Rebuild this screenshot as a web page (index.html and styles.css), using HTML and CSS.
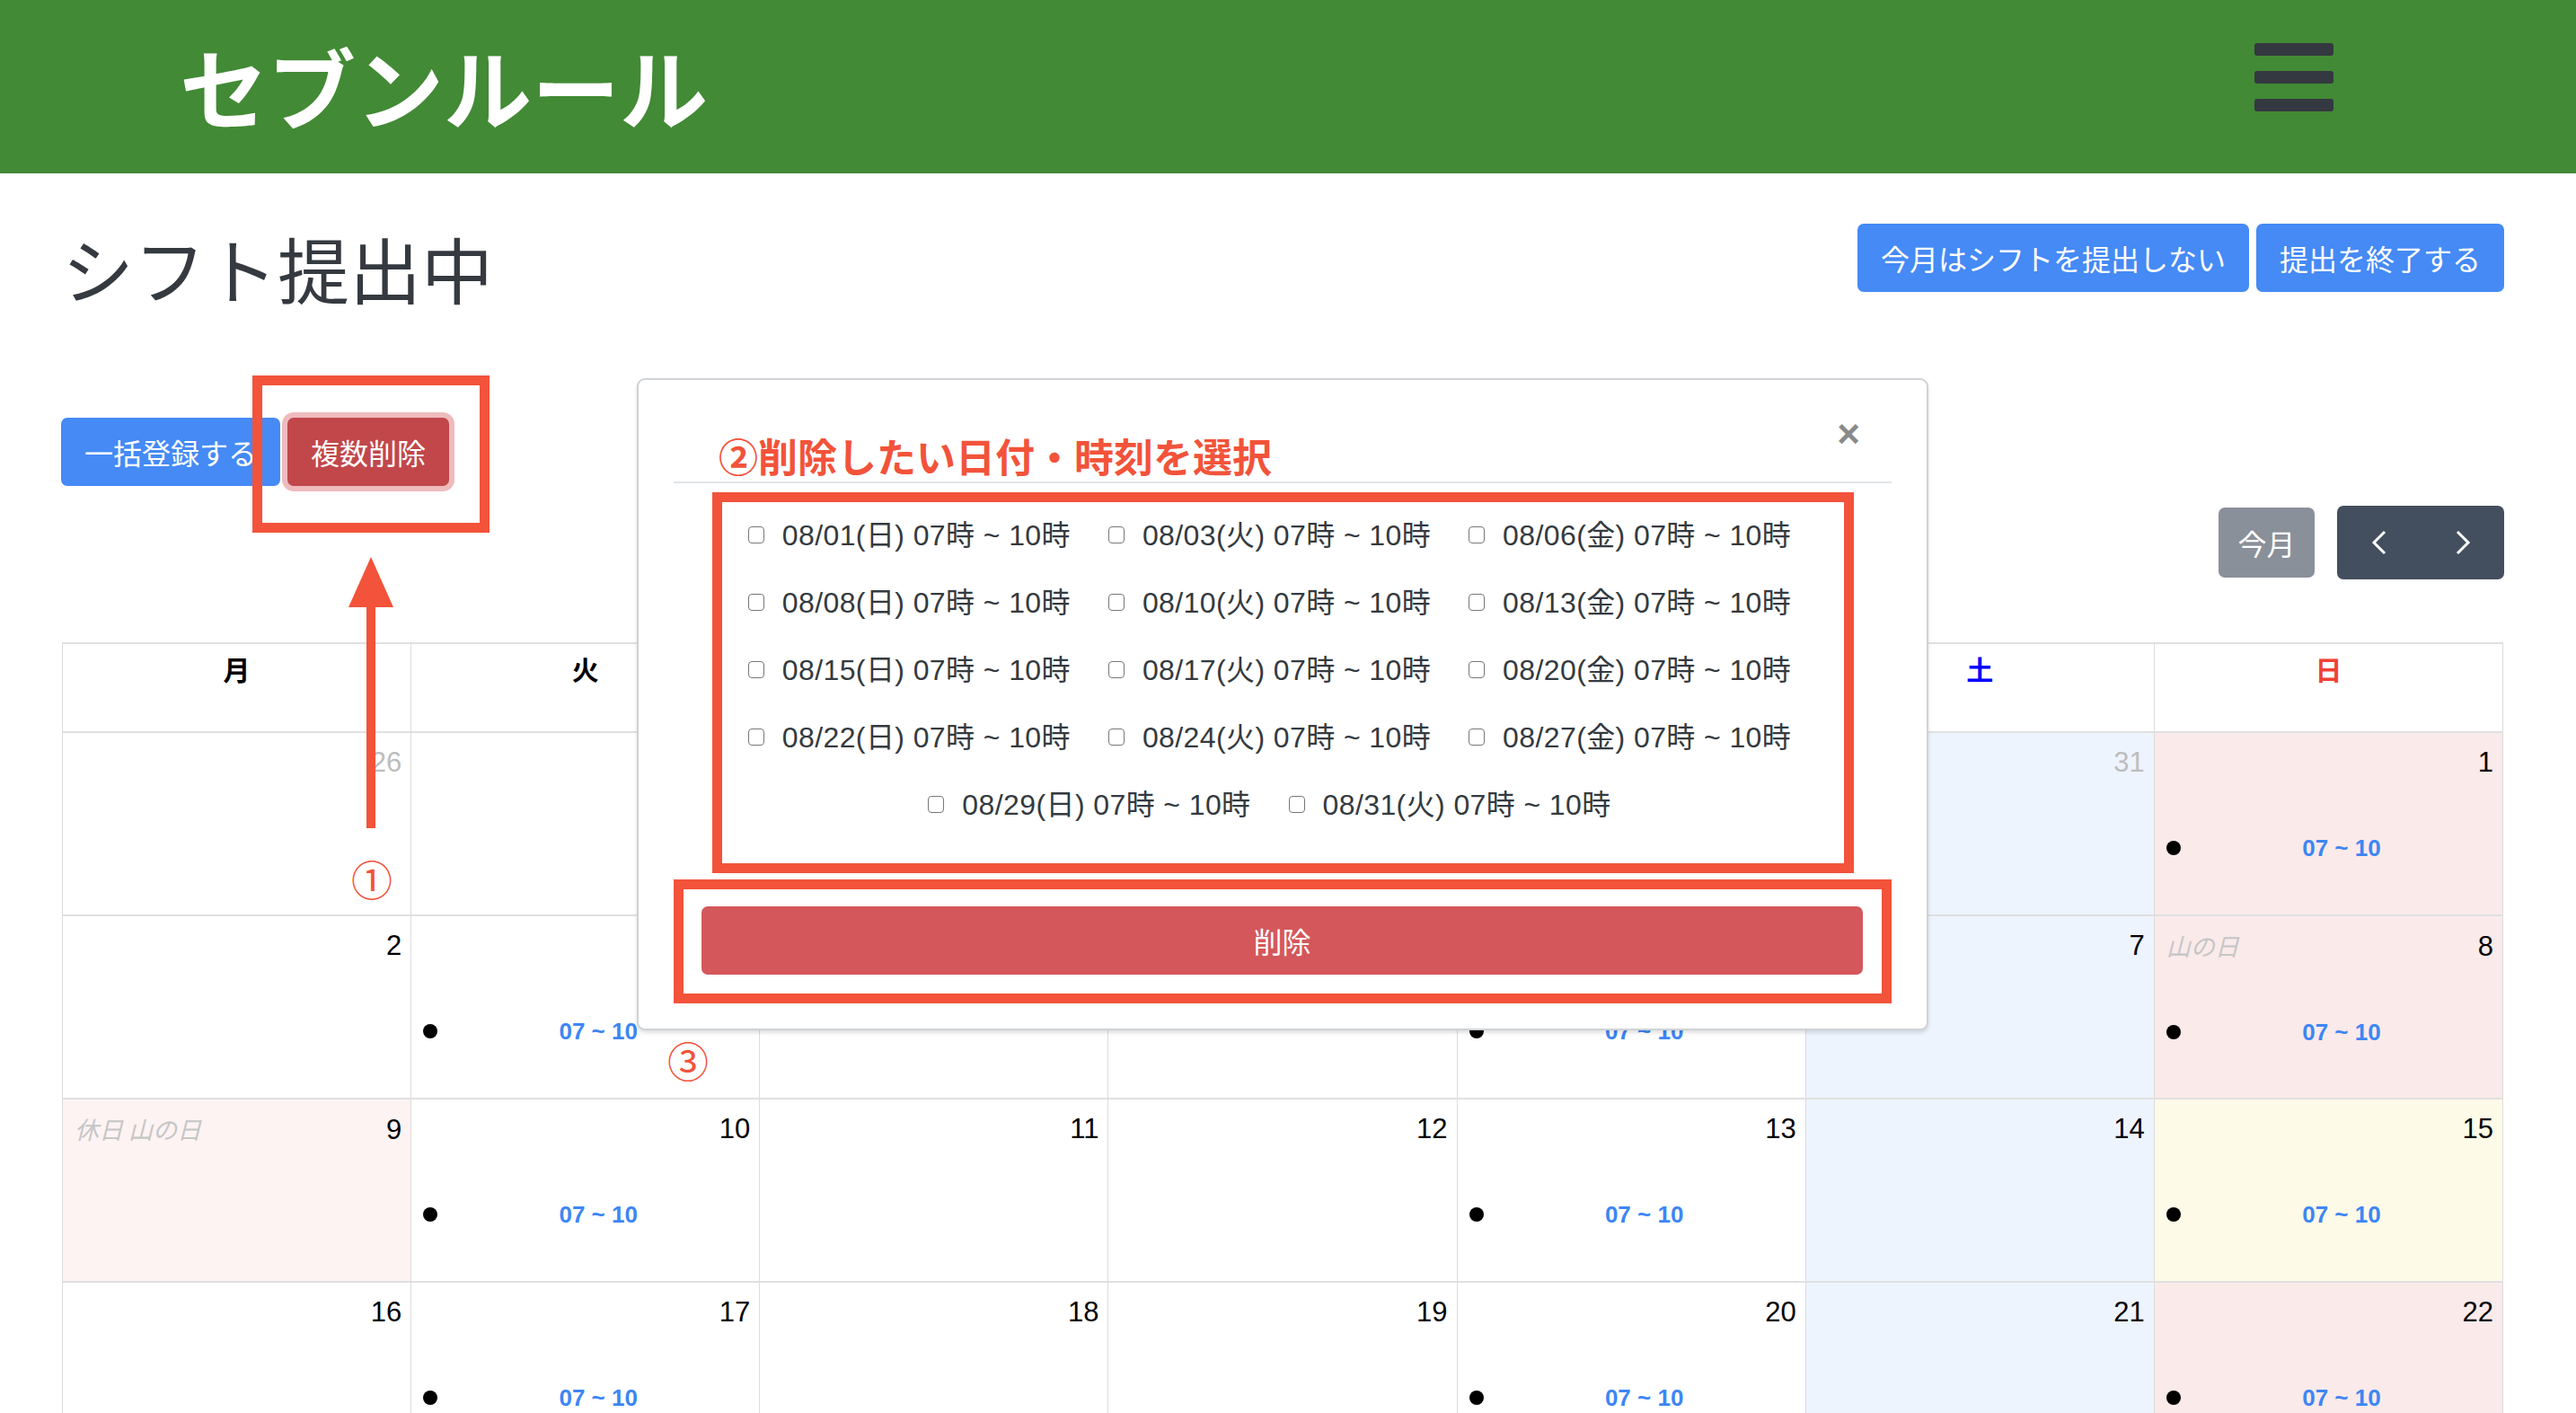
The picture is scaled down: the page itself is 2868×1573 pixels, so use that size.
FILE: index.html
```html
<!DOCTYPE html>
<html lang="ja">
<head>
<meta charset="utf-8">
<title>セブンルール</title>
<link rel="stylesheet" href="styles.css">
</head>
<body>
<header class="topbar">
  <div class="brand">セブンルール</div>
  <div class="burger"><span></span><span></span><span></span></div>
</header>

<main class="page">
  <div class="head">
    <h1 class="title">シフト提出中</h1>
    <div class="actions">
      <button class="btn btn-blue">今月はシフトを提出しない</button>
      <button class="btn btn-blue">提出を終了する</button>
    </div>
  </div>

  <div class="tools">
    <button class="btn btn-blue">一括登録する</button>
    <button class="btn btn-red focus">複数削除</button>
  </div>

  <div class="toolbar">
    <button class="today">今月</button>
    <div class="navgrp">
      <button class="nav"><svg width="18" height="28" viewBox="0 0 18 28"><polyline points="15,2 3,14 15,26" fill="none" stroke="#fff" stroke-width="3"/></svg></button>
      <button class="nav"><svg width="18" height="28" viewBox="0 0 18 28"><polyline points="3,2 15,14 3,26" fill="none" stroke="#fff" stroke-width="3"/></svg></button>
    </div>
  </div>

  <div class="cal">
    <div class="dh">月</div><div class="dh">火</div><div class="dh">水</div><div class="dh">木</div><div class="dh">金</div><div class="dh dh-sat">土</div><div class="dh dh-sun">日</div>

    <div class="cell other"><div class="top"><span class="num">26</span></div></div>
    <div class="cell other"><div class="top"><span class="num">27</span></div></div>
    <div class="cell other"><div class="top"><span class="num">28</span></div></div>
    <div class="cell other"><div class="top"><span class="num">29</span></div></div>
    <div class="cell other"><div class="top"><span class="num">30</span></div></div>
    <div class="cell other sat"><div class="top"><span class="num">31</span></div></div>
    <div class="cell sun"><div class="top"><span class="num">1</span></div><div class="ev"><span class="dot"></span><span class="time">07 ~ 10</span></div></div>

    <div class="cell"><div class="top"><span class="num">2</span></div></div>
    <div class="cell"><div class="top"><span class="num">3</span></div><div class="ev"><span class="dot"></span><span class="time">07 ~ 10</span></div></div>
    <div class="cell"><div class="top"><span class="num">4</span></div></div>
    <div class="cell"><div class="top"><span class="num">5</span></div></div>
    <div class="cell"><div class="top"><span class="num">6</span></div><div class="ev"><span class="dot"></span><span class="time">07 ~ 10</span></div></div>
    <div class="cell sat"><div class="top"><span class="num">7</span></div></div>
    <div class="cell sun"><div class="top"><span class="hol">山の日</span><span class="num">8</span></div><div class="ev"><span class="dot"></span><span class="time">07 ~ 10</span></div></div>

    <div class="cell holiday"><div class="top"><span class="hol">休日 山の日</span><span class="num">9</span></div></div>
    <div class="cell"><div class="top"><span class="num">10</span></div><div class="ev"><span class="dot"></span><span class="time">07 ~ 10</span></div></div>
    <div class="cell"><div class="top"><span class="num">11</span></div></div>
    <div class="cell"><div class="top"><span class="num">12</span></div></div>
    <div class="cell"><div class="top"><span class="num">13</span></div><div class="ev"><span class="dot"></span><span class="time">07 ~ 10</span></div></div>
    <div class="cell sat"><div class="top"><span class="num">14</span></div></div>
    <div class="cell today-cell"><div class="top"><span class="num">15</span></div><div class="ev"><span class="dot"></span><span class="time">07 ~ 10</span></div></div>

    <div class="cell"><div class="top"><span class="num">16</span></div></div>
    <div class="cell"><div class="top"><span class="num">17</span></div><div class="ev"><span class="dot"></span><span class="time">07 ~ 10</span></div></div>
    <div class="cell"><div class="top"><span class="num">18</span></div></div>
    <div class="cell"><div class="top"><span class="num">19</span></div></div>
    <div class="cell"><div class="top"><span class="num">20</span></div><div class="ev"><span class="dot"></span><span class="time">07 ~ 10</span></div></div>
    <div class="cell sat"><div class="top"><span class="num">21</span></div></div>
    <div class="cell sun"><div class="top"><span class="num">22</span></div><div class="ev"><span class="dot"></span><span class="time">07 ~ 10</span></div></div>
  </div>
</main>

<div class="modal">
  <div class="mhead">
    <h2 class="mtitle">②削除したい日付・時刻を選択</h2>
    <span class="close">×</span>
  </div>
  <div class="pick">
    <label class="item"><input type="checkbox">08/01(日) 07時 ~ 10時</label><label class="item"><input type="checkbox">08/03(火) 07時 ~ 10時</label><label class="item"><input type="checkbox">08/06(金) 07時 ~ 10時</label><label class="item"><input type="checkbox">08/08(日) 07時 ~ 10時</label><label class="item"><input type="checkbox">08/10(火) 07時 ~ 10時</label><label class="item"><input type="checkbox">08/13(金) 07時 ~ 10時</label><label class="item"><input type="checkbox">08/15(日) 07時 ~ 10時</label><label class="item"><input type="checkbox">08/17(火) 07時 ~ 10時</label><label class="item"><input type="checkbox">08/20(金) 07時 ~ 10時</label><label class="item"><input type="checkbox">08/22(日) 07時 ~ 10時</label><label class="item"><input type="checkbox">08/24(火) 07時 ~ 10時</label><label class="item"><input type="checkbox">08/27(金) 07時 ~ 10時</label><label class="item"><input type="checkbox">08/29(日) 07時 ~ 10時</label><label class="item"><input type="checkbox">08/31(火) 07時 ~ 10時</label>
  </div>
  <div class="delbox">
    <button class="delbtn">削除</button>
  </div>
</div>

<div class="ann-box"></div>
<svg class="ann-arrow" width="58" height="306" viewBox="0 0 58 306">
  <polygon points="29,0 54,56 4,56" fill="#f2533a"/>
  <rect x="24" y="50" width="10" height="252" fill="#f2533a"/>
</svg>
<span class="ann-num n1">①</span>
<span class="ann-num n3">③</span>
</body>
</html>
```

FILE: styles.css
```css
* { box-sizing: border-box; }

body {
  margin: 0;
  font-family: "Liberation Sans", "Noto Sans CJK JP", sans-serif;
  color: #212529;
  background: #fff;
  position: relative;
  height: 1573px;
  overflow: hidden;
}

button { font-family: "Noto Sans CJK JP", sans-serif; cursor: pointer; }

.topbar {
  height: 193px;
  background: #428a35;
  display: flex;
  align-items: center;
  justify-content: space-between;
  padding: 0 270px 0 200px;
}
.brand {
  font-family: "Noto Sans CJK JP", sans-serif;
  font-size: 98px;
  font-weight: 700;
  color: #fff;
  line-height: 1;
  margin-top: -6px;
}
.burger {
  display: flex;
  flex-direction: column;
  gap: 17px;
  width: 88px;
  margin-top: -22px;
}
.burger span {
  height: 14px;
  border-radius: 3px;
  background: #343840;
}

.page { padding: 0 81px 0 69px; }

.head {
  display: flex;
  justify-content: space-between;
  align-items: flex-start;
  padding-top: 56px;
}
.title {
  margin: 0;
  font-family: "Noto Sans CJK JP", sans-serif;
  font-size: 80px;
  font-weight: 400;
  line-height: 96px;
  color: #343a40;
}
.actions { display: flex; gap: 8px; margin-right: -1px; }

.btn {
  height: 76px;
  padding: 0 26px;
  font-size: 32px;
  border: none;
  border-radius: 7px;
  color: #fff;
  line-height: 76px;
}
.btn-blue { background: #458af5; }
.btn-red { background: #c1474b; }
.focus { box-shadow: 0 0 0 6px #efbbbd; }

.tools {
  margin-top: 120px;
  margin-left: -1px;
  display: flex;
  gap: 8px;
}

.toolbar {
  margin-top: 22px;
  height: 82px;
  display: flex;
  justify-content: flex-end;
  align-items: center;
  gap: 25px;
  margin-right: -1px;
}
.today {
  height: 78px;
  width: 107px;
  border: none;
  border-radius: 7px;
  background: #8a9099;
  color: #fff;
  font-size: 32px;
}
.navgrp {
  display: flex;
  height: 82px;
  background: #434f5e;
  border-radius: 7px;
}
.nav {
  width: 93px;
  height: 82px;
  border: none;
  background: transparent;
  display: flex;
  align-items: center;
  justify-content: center;
}

.cal {
  margin-top: 70px;
  display: grid;
  grid-template-columns: repeat(7, 1fr);
  border-left: 1px solid #dcdcdc;
  border-top: 2px solid #e0e0e0;
}
.dh {
  height: 99px;
  border-right: 1px solid #dcdcdc;
  border-bottom: 2px solid #e0e0e0;
  text-align: center;
  font-family: "Noto Sans CJK JP", sans-serif;
  font-weight: 700;
  font-size: 30px;
  line-height: 45px;
  padding-top: 5px;
  color: #000;
}
.dh-sat { color: #0000ff; }
.dh-sun { color: #ef4135; }

.cell {
  height: 204px;
  border-right: 1px solid #dcdcdc;
  border-bottom: 2px solid #e0e0e0;
  padding: 10px 10px 0 13px;
  color: #000;
}
.cell.sat { background: #edf4fe; }
.cell.sun { background: #faeaea; }
.cell.holiday { background: #fdf3f3; }
.cell.today-cell { background: #fdfae8; }

.top {
  display: flex;
  justify-content: space-between;
  align-items: baseline;
  line-height: 46px;
}
.num { font-size: 31px; margin-left: auto; }
.other .num { color: #bdbdbd; }
.hol {
  font-family: "Noto Sans CJK JP", sans-serif;
  font-size: 27px;
  font-style: italic;
  color: #c6c6c6;
}

.ev {
  display: flex;
  align-items: center;
  height: 36px;
  margin-top: 54px;
  margin-right: -10px;
}
.dot {
  flex: none;
  width: 16px;
  height: 16px;
  border-radius: 50%;
  background: #000;
}
.time {
  flex: 1;
  text-align: center;
  font-weight: 700;
  font-size: 26px;
  color: #3d86f4;
}

.modal {
  position: absolute;
  left: 709px;
  top: 421px;
  width: 1438px;
  height: 726px;
  background: #fff;
  border: 2px solid #cfd2d6;
  border-radius: 9px;
  box-shadow: 0 3px 4px rgba(0, 0, 0, 0.12);
  padding: 0 39px 28px;
  z-index: 5;
}
.mhead {
  position: relative;
  padding-top: 55px;
  border-bottom: 2px solid #e2e5e8;
}
.mtitle {
  margin: 0;
  padding-left: 50px;
  font-family: "Noto Sans CJK JP", sans-serif;
  font-weight: 700;
  font-size: 44px;
  line-height: 58px;
  color: #f2533a;
}
.close {
  position: absolute;
  right: 35px;
  top: 38px;
  font-size: 44px;
  line-height: 44px;
  font-weight: 700;
  color: #8a8a8a;
}
.pick {
  margin: 10px 42px 0 43px;
  height: 424px;
  border: 11px solid #f2533a;
  padding: 0 0 27px;
  text-align: center;
  line-height: 75px;
  font-size: 32px;
  letter-spacing: 0.4px;
  color: #343a40;
}
.item {
  display: inline-block;
  white-space: nowrap;
  margin: 0 36px 0 6px;
}
.item input {
  appearance: none;
  -webkit-appearance: none;
  width: 18px;
  height: 19px;
  margin: 0 20px 0 0;
  border: 1.5px solid #777;
  border-radius: 4px;
  background: #fff;
  vertical-align: middle;
  position: relative;
  top: -3px;
}
.delbox {
  margin-top: 7px;
  border: 11px solid #f2533a;
  padding: 19px 21px 21px 20px;
}
.delbtn {
  display: block;
  width: 100%;
  height: 76px;
  border: none;
  border-radius: 7px;
  background: #d4575b;
  color: #fff;
  font-size: 32px;
}

.ann-box {
  position: absolute;
  left: 281px;
  top: 418px;
  width: 264px;
  height: 175px;
  border: 11px solid #f2533a;
  z-index: 10;
}
.ann-arrow {
  position: absolute;
  left: 384px;
  top: 620px;
  z-index: 10;
}
.ann-num {
  position: absolute;
  width: 50px;
  text-align: center;
  font-family: "Noto Sans CJK JP", sans-serif;
  font-size: 46px;
  line-height: 50px;
  color: #f2533a;
  z-index: 10;
}
.n1 { left: 389px; top: 952px; }
.n3 { left: 741px; top: 1154px; }
```
